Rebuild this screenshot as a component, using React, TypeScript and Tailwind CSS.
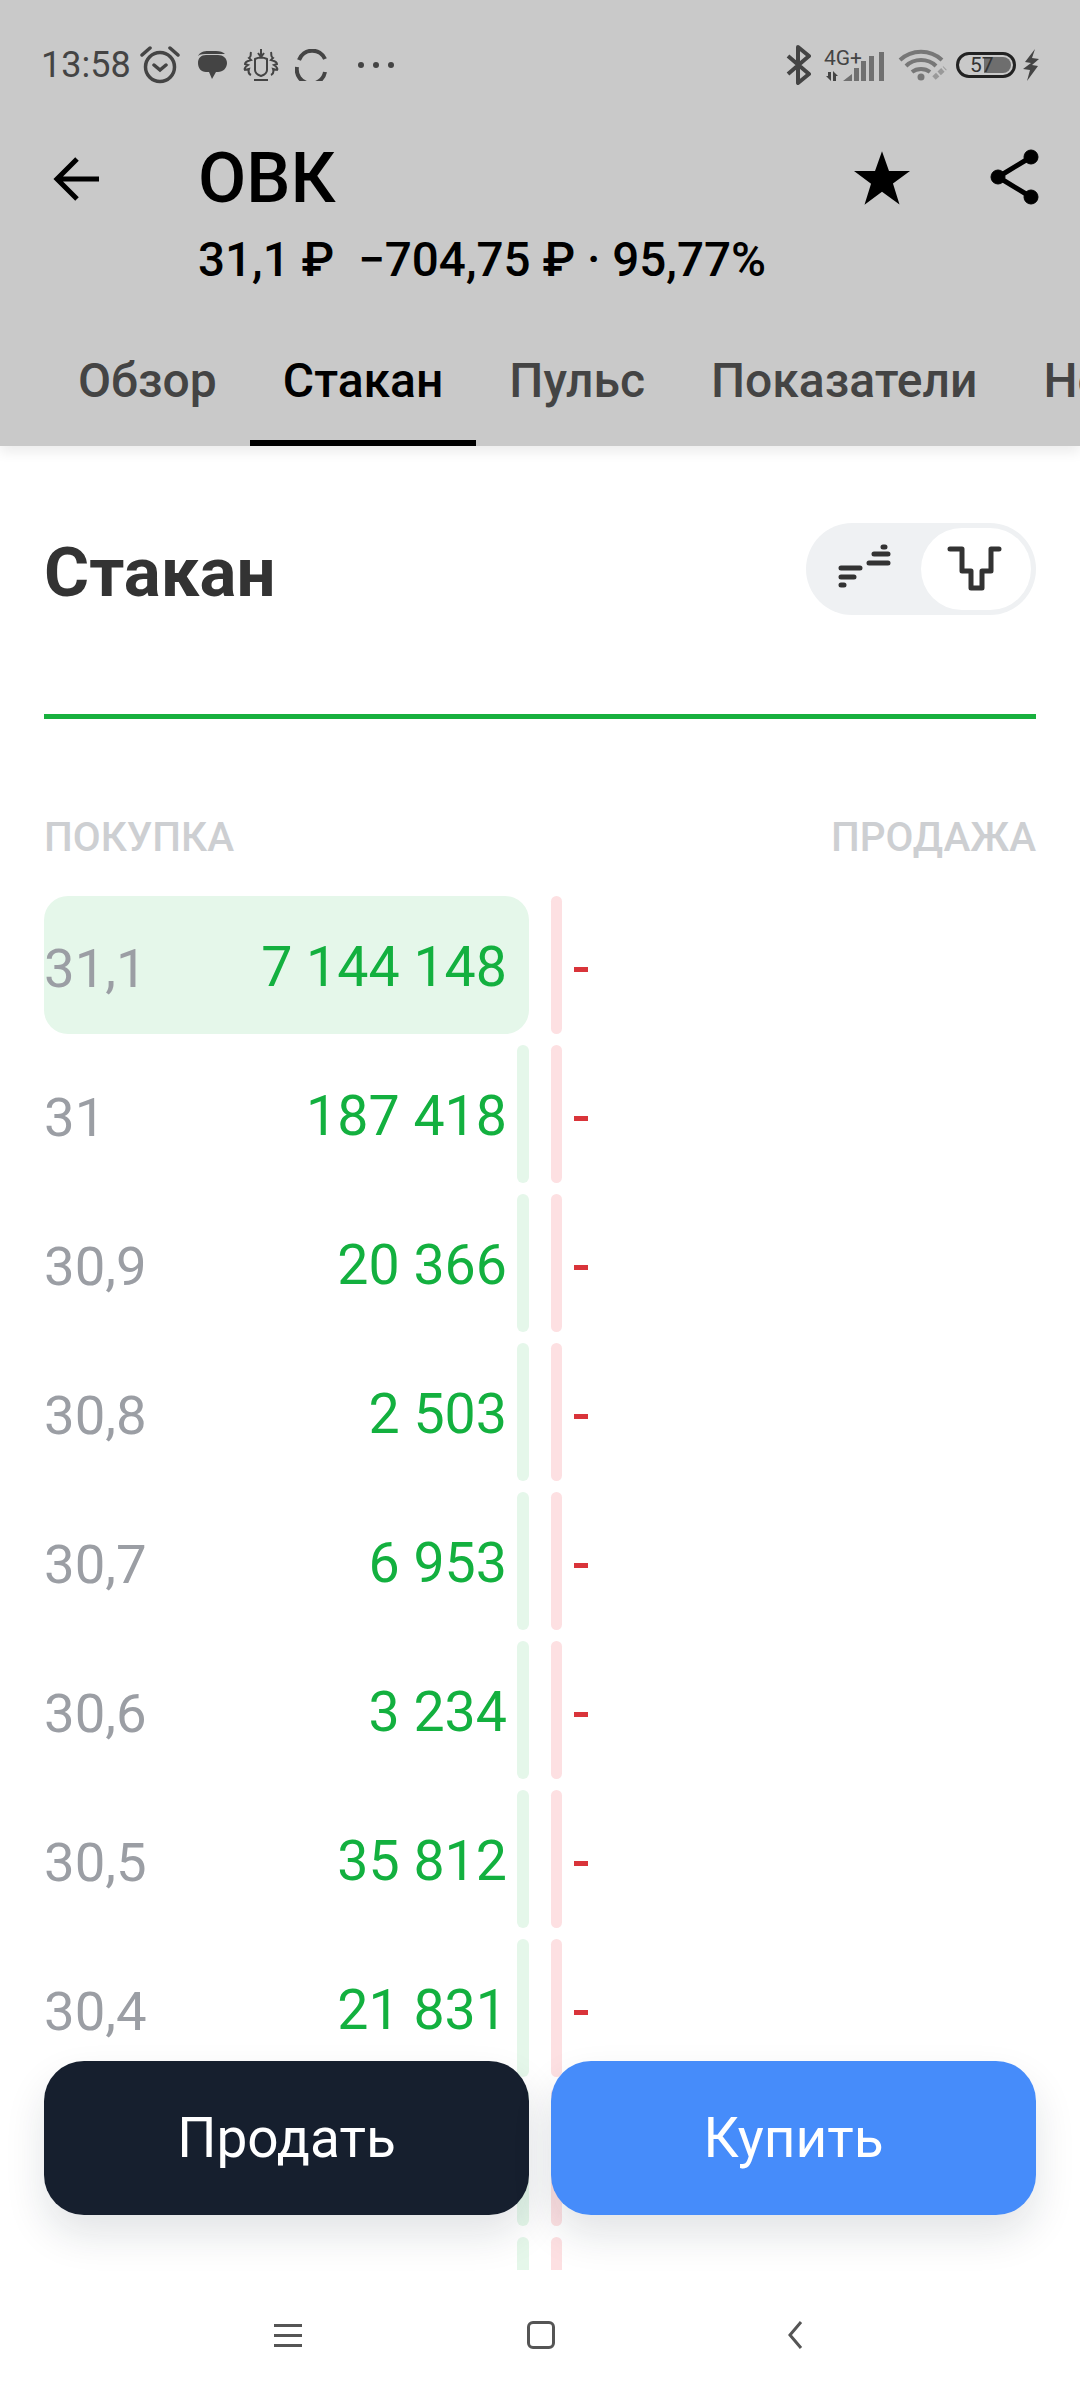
const font = { fontFamily: 'Roboto, sans-serif' };

const rows = [
  ['31,1', '7 144 148'],
  ['31', '187 418'],
  ['30,9', '20 366'],
  ['30,8', '2 503'],
  ['30,7', '6 953'],
  ['30,6', '3 234'],
  ['30,5', '35 812'],
  ['30,4', '21 831'],
  ['30,3', '14 207'],
  ['30,2', '9 560'],
];

const tabs = ['Обзор', 'Стакан', 'Пульс', 'Показатели', 'Новости'];

function LeftStatusIcons() {
  return (
    <div className="ml-[9px] flex items-center">
      <svg width="40" height="38" viewBox="0 0 40 38" fill="none" stroke="#444" strokeWidth="3.5">
        <circle cx="20" cy="21" r="14.500" />
        <path d="M14 19l6 5 6-5M2 9l8-7M38 9l-8-7" strokeLinecap="round" />
      </svg>
      <svg className="ml-[17px]" width="30" height="30" viewBox="0 0 30 30" fill="#444">
        <path d="M1 6C3 2 7 1 11 1h8c4 0 7 1 9 3H11C7 4 3 4 1 6z" />
        <path d="M9 5h12c5 0 9 3 9 8s-4 9-9 9h-2l-4 7-3-7H9c-5 0-8-4-8-9s3-8 8-8z" />
      </svg>
      <svg className="ml-[16px]" width="36" height="32" viewBox="0 0 36 32" fill="none" stroke="#444" strokeWidth="2">
        <path d="M18 0v7M15 4l3 4 3-4M12 10c4-2 8-2 12 0v11c0 3-3 5-6 6-3-1-6-3-6-6z" />
        <path d="M8 3C7 6 9 7 6 9l2 2c-4 1-6 2-6 4l3 1c-3 2-4 4-3 5l4-1c-1 3 0 5 2 6M28 3c1 3-1 4 2 6l-2 2c4 1 6 2 6 4l-3 1c3 2 4 4 3 5l-4-1c1 3 0 5-2 6M11 31h14" />
      </svg>
      <svg className="ml-[16px]" width="32" height="32" viewBox="0 0 32 32" fill="none" stroke="#444" strokeWidth="4">
        <path d="M30 10A14 14 0 0 0 4 11M2 18a14 14 0 0 0 28 5" />
      </svg>
      <div className="ml-[31px] flex gap-[9px]">
        <span className="size-[6px] rounded-full bg-[#444]" />
        <span className="size-[6px] rounded-full bg-[#444]" />
        <span className="size-[6px] rounded-full bg-[#444]" />
      </div>
    </div>
  );
}

function RightStatusIcons() {
  return (
    <div className="flex items-center">
      <svg width="26" height="40" viewBox="0 0 26 40" fill="none" stroke="#444" strokeWidth="4">
        <path d="M2 11l21 18-11 9V2l11 9L2 29" strokeLinejoin="round" />
      </svg>
      <div className="relative ml-[12px] h-[32px] w-[62px]">
        <span className="absolute left-0 top-[-2px] text-[21px] leading-[22px] text-[#444]">4G+</span>
        <svg className="absolute left-0 top-0" width="62" height="32" viewBox="0 0 62 32" fill="#707070">
          <path d="M19 32l9-7v7zM30 19h5v13h-5zM37 12h5v20h-5zM45 7h5v25h-5zM55 3h5v29h-5z" />
          <path d="M4 23h3v9l-5-5h2zM9 32v-10l5 5h-2v5z" fill="#444" />
        </svg>
      </div>
      <svg className="ml-[12px]" width="50" height="34" viewBox="0 0 50 34" fill="none" stroke="#777" strokeWidth="4">
        <path d="M2 12c12-11 30-11 42 0M8 18c8-8 22-8 30 0M14 24c5-4 13-4 18 0" />
        <circle cx="23" cy="29" r="3.500" fill="#777" stroke="none" />
        <path d="M36 30l11-10" stroke="#999" strokeWidth="5" strokeDasharray="5 2" />
      </svg>
      <div className="relative ml-[8px] h-[26px] w-[60px] overflow-hidden rounded-full border-[3px] border-[#222]">
        <div className="absolute inset-y-[2px] left-[25px] right-[2px] rounded-r-full bg-[#6e6e6e]" />
        <span className="absolute left-[11px] top-0 text-[21px] leading-[20px] text-[#333]">57</span>
      </div>
      <svg className="ml-[7px]" width="17" height="32" viewBox="0 0 17 32" fill="#444">
        <path d="M12 0L2 13l6 1-8 6 7 1-3 11 11-15-6-1 7-6-7-1z" />
      </svg>
    </div>
  );
}

function BookRow({ price, qty, best }: { price: string; qty: string; best: boolean }) {
  return (
    <div className="flex h-[138px] shrink-0 items-center">
      <div className="relative flex h-full w-[485px] items-center justify-between pr-[22px]">
        {best ? (
          <div className="absolute inset-0 rounded-[24px] bg-[#e5f7ea]" />
        ) : (
          <div className="absolute inset-y-0 right-0 w-[12px] rounded-full bg-[#e5f7ea]" />
        )}
        <span className="relative pt-[6px] text-[54.500px] leading-none text-[#9b9ea4]">{price}</span>
        <span className="relative pt-[6px] text-[55.500px] leading-none text-[#13b03f]">{qty}</span>
      </div>
      <div className="ml-[22px] h-full w-[11px] rounded-full bg-[#fde0e2]" />
      <span className="ml-[12px] mt-[9px] h-[5px] w-[14px] bg-[#d9343a]" />
    </div>
  );
}

export default function App() {
  return (
    <div className="relative flex h-[2400px] w-[1080px] flex-col overflow-hidden bg-white" style={font}>
      <header className="relative z-10 flex h-[446px] shrink-0 flex-col bg-[#c9c9c9] shadow-[0_6px_12px_rgba(0,0,0,0.08)]">
        <div className="flex h-[130px] shrink-0 items-center justify-between pl-[41px] pr-[40px]">
          <div className="flex items-center">
            <span className="text-[36px] leading-none text-[#444]">13:58</span>
            <LeftStatusIcons />
          </div>
          <RightStatusIcons />
        </div>
        <div className="flex items-start pl-[52px] pr-[40px] pt-[3px]">
          <svg className="mt-[23px]" width="48" height="46" viewBox="0 0 48 46" fill="none" stroke="#000" strokeWidth="5">
            <path d="M47 23H5M25 3L5 23l20 20" />
          </svg>
          <div className="ml-[98px] flex-1">
            <div className="text-[70px] font-medium leading-[90px] text-black">ОВК</div>
            <div className="mt-[10px] whitespace-pre text-[47.600px] font-medium leading-[54px] text-black">31,1 ₽  −704,75 ₽ · 95,77%</div>
          </div>
          <svg className="mt-[18px]" width="56" height="54" viewBox="0 0 24 23" fill="#000">
            <path d="M12 0l3 8.500h9l-7.300 5.400 2.800 9L12 17.400 4.500 23l2.800-9L0 8.500h9z" />
          </svg>
          <svg className="ml-[80px] mt-[16px]" width="50" height="56" viewBox="0 0 50 56" fill="#000" stroke="#000">
            <circle cx="41" cy="8" r="7" />
            <circle cx="41" cy="48" r="7" />
            <circle cx="8" cy="28" r="7" />
            <path d="M41 8L8 28l33 20" fill="none" strokeWidth="5" />
          </svg>
        </div>
        <nav className="mt-auto flex pl-[45px]">
          {tabs.map(tab => (
            <div
              key={tab}
              className={`relative h-[94px] shrink-0 whitespace-nowrap px-[33px] text-[48px] font-medium leading-[58px] ${tab === 'Стакан' ? 'text-black' : 'text-[#444]'}`}
            >
              {tab}
              {tab === 'Стакан' && <span className="absolute inset-x-0 bottom-0 h-[6px] bg-black" />}
            </div>
          ))}
        </nav>
      </header>

      <main className="flex min-h-0 flex-1 flex-col overflow-hidden px-[44px]">
        <div className="mt-[77px] flex h-[92px] shrink-0 items-center justify-between">
          <h1 className="pt-[6px] text-[69px] font-bold leading-none text-[#333]">Стакан</h1>
          <div className="flex h-[92px] w-[230px] items-center justify-between rounded-full bg-[#eff1f3] pl-[27px] pr-[5px]">
            <svg width="60" height="50" viewBox="0 0 60 50" fill="none" stroke="#333" strokeWidth="5" strokeLinecap="round">
              <path d="M8 24h19M8 33h13M8 41h3M36 19h19M41 10h14M50 3h2" />
            </svg>
            <div className="flex h-[82px] w-[110px] items-center justify-center rounded-full bg-white">
              <svg width="60" height="50" viewBox="0 0 60 50" fill="none" stroke="#333" strokeWidth="5" strokeLinecap="round" strokeLinejoin="round">
                <path d="M4 5h12v22h9v17h11V27h9V5h8" />
              </svg>
            </div>
          </div>
        </div>
        <div className="mt-[99px] h-[5px] shrink-0 bg-[#18b03e]" />
        <div className="mt-[98px] flex shrink-0 justify-between text-[40.500px] font-medium leading-[40px] text-[#cdcfd2]">
          <span>ПОКУПКА</span>
          <span>ПРОДАЖА</span>
        </div>
        <div className="mt-[39px] flex min-h-0 flex-1 flex-col gap-[11px] overflow-hidden">
          {rows.map(([price, qty], i) => (
            <BookRow key={price} price={price} qty={qty} best={i === 0} />
          ))}
        </div>
      </main>

      <div className="absolute inset-x-[44px] top-[2061px] flex gap-[22px]">
        <button className="h-[154px] flex-1 rounded-[40px] bg-[#161f2e] text-[55px] text-white shadow-[0_20px_40px_rgba(20,30,50,0.12)]" type="button">
          Продать
        </button>
        <button className="h-[154px] flex-1 rounded-[40px] bg-[#468cfa] text-[55px] text-white shadow-[0_20px_40px_rgba(20,30,50,0.12)]" type="button">
          Купить
        </button>
      </div>

      <footer className="flex h-[130px] shrink-0 items-center justify-center bg-white pr-[4px]">
        <div className="flex flex-col gap-[7px]">
          <span className="h-[3px] w-[28px] bg-[#555]" />
          <span className="h-[3px] w-[28px] bg-[#555]" />
          <span className="h-[3px] w-[28px] bg-[#555]" />
        </div>
        <div className="ml-[225px] h-[28px] w-[28px] rounded-[6px] border-[3px] border-[#555]" />
        <svg className="ml-[232px]" width="16" height="28" viewBox="0 0 16 28" fill="none" stroke="#555" strokeWidth="3">
          <path d="M14 1L3 14l11 13" />
        </svg>
      </footer>
    </div>
  );
}
